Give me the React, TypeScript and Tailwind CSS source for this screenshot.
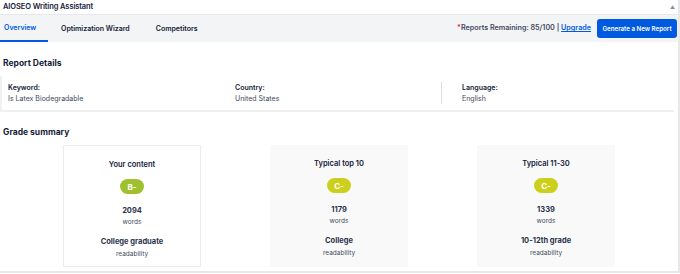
import React from "react";

const cards = [
  { title: "Your content", grade: "B-", color: "bg-[#a0c12f]", words: "2094", read: "College graduate", white: true },
  { title: "Typical top 10", grade: "C-", color: "bg-[#ccd01c]", words: "1179", read: "College", white: false },
  { title: "Typical 11-30", grade: "C-", color: "bg-[#ccd01c]", words: "1339", read: "10-12th grade", white: false },
];

export default function App() {
  return (
    <div className="w-[680px] h-[274px] bg-white overflow-hidden text-[#141b38]" style={{ fontFamily: "Inter, 'Noto Sans', sans-serif" }}>
      <div className="w-[680px] h-[273px] border-r-2 border-b-2 border-[#e8e8e8] flex flex-col">
        <div className="h-[15px] flex items-center justify-between pl-[3px] pr-[3px] border-b border-[#e5e7eb]">
          <span className="text-[7.5px] font-semibold leading-none tracking-[-0.1px]">AIOSEO Writing Assistant</span>
          <span className="text-[5px] text-[#8c8f9a] leading-none">▲</span>
        </div>
        <div className="h-[27px] bg-[#f3f4f6] flex items-stretch justify-between pr-[1px]">
          <div className="flex items-stretch text-[7px] font-semibold">
            <div className="w-[48px] flex items-center pl-[4px] text-[#005ae0] border-b-2 border-[#005ae0] pt-[2px]">Overview</div>
            <div className="flex items-center pl-[13px] pt-[2px]">Optimization Wizard</div>
            <div className="flex items-center pl-[26px] pt-[2px]">Competitors</div>
          </div>
          <div className="flex items-center gap-[6px]">
            <span className="text-[7.2px] font-semibold text-[#434960]">
              <span className="text-[#df2a4a]">*</span>Reports Remaining: 85/100 |{" "}
              <span className="text-[#005ae0] underline">Upgrade</span>
            </span>
            <div className="h-[19px] w-[80px] rounded-[3px] bg-[#005ae0] text-white text-[6.2px] font-semibold flex items-center justify-center">
              Generate a New Report
            </div>
          </div>
        </div>
        <div className="pt-[17px] pl-[3px] text-[8.5px] font-bold leading-none">Report Details</div>
        <div className="mt-[8px] mr-[4px] h-[36px] border-l-2 border-b-2 border-[#f0f0f0] flex items-center text-[7px]">
          <div className="w-[233px] pl-[6px] flex flex-col leading-[11px]">
            <span className="font-semibold text-[#141b38]">Keyword:</span>
            <span className="text-[#434960]">Is Latex Biodegradable</span>
          </div>
          <div className="w-[206px] flex flex-col leading-[11px]">
            <span className="font-semibold">Country:</span>
            <span className="text-[#434960]">United States</span>
          </div>
          <div className="h-[22px] w-px bg-[#dcdde1]" />
          <div className="pl-[20px] flex flex-col leading-[11px]">
            <span className="font-semibold">Language:</span>
            <span className="text-[#434960]">English</span>
          </div>
        </div>
        <div className="pt-[16px] pl-[3px] text-[8.5px] font-bold leading-none">Grade summary</div>
        <div className="mt-[9px] pl-[63px] flex gap-[69px]">
          {cards.map((c) => (
            <div
              key={c.title}
              className={`w-[138px] h-[122px] flex flex-col items-center pt-[14px] ${c.white ? "bg-white border border-[#ececec]" : "bg-[#f9f9f9]"}`}
            >
              <span className="text-[7.5px] font-semibold text-[#141b38] leading-[10px]">{c.title}</span>
              <div className={`mt-[9px] w-[24px] h-[15px] rounded-full ${c.color} text-white text-[8px] font-bold flex items-center justify-center`}>
                {c.grade}
              </div>
              <span className="mt-[12px] text-[7.5px] font-bold leading-[10px] text-[#2c324c]">{c.words}</span>
              <span className="mt-[1px] text-[6.5px] leading-[10px] text-[#434960]">words</span>
              <span className="mt-[10px] text-[7.5px] font-bold leading-[10px] text-[#2c324c]">{c.read}</span>
              <span className="mt-[2px] text-[6.5px] leading-[10px] text-[#434960]">readability</span>
            </div>
          ))}
        </div>
      </div>
    </div>
  );
}
